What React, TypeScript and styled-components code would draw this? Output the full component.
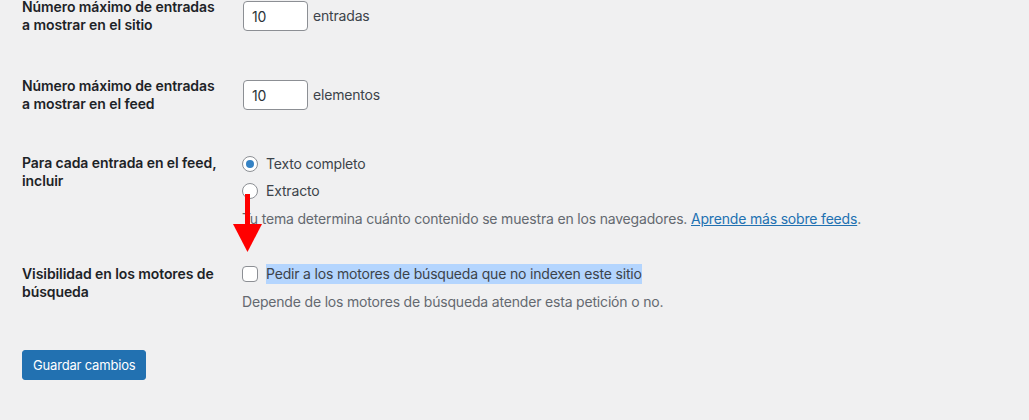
import React from "react";
import styled, { createGlobalStyle } from "styled-components";

const GlobalStyle = createGlobalStyle`
  html, body {
    margin: 0;
    padding: 0;
    background: #f0f0f1;
  }
  body {
    font-family: Inter, "Liberation Sans", Arial, sans-serif;
    font-size: 14px;
    letter-spacing: -0.18px;
    color: #3c434a;
    overflow: hidden;
  }
`;

const Page = styled.div`
  position: relative;
  width: 1029px;
  height: 420px;
  overflow: hidden;
  padding-left: 22px;
  box-sizing: border-box;
`;

const Form = styled.form`
  margin-top: -22px;
`;

const Row = styled.div<{ $h: number }>`
  display: grid;
  grid-template-columns: 210px 1fr;
  height: ${(p) => p.$h}px;
`;

const Label = styled.div`
  padding: 20px 10px 0 0;
  width: 200px;
  line-height: 18.2px;
  font-weight: 600;
  letter-spacing: -0.08px;
  color: #1d2327;
`;

const Field = styled.div<{ $pt: number }>`
  padding: ${(p) => p.$pt}px 10px 0 10px;
  line-height: 18.2px;
`;

const InputLine = styled.div`
  display: flex;
  align-items: center;
  height: 30px;
  gap: 4px;
`;

const NumberInput = styled.input`
  box-sizing: border-box;
  width: 65px;
  height: 30px;
  margin: 0 1px;
  padding: 0 8px;
  border: 1px solid #8c8f94;
  border-radius: 4px;
  background: #fff;
  color: #2c3338;
  font-family: inherit;
  font-size: 14px;
  letter-spacing: inherit;
  outline: none;
`;

const OptionLine = styled.label<{ $h?: number }>`
  display: flex;
  align-items: center;
  gap: 8px;
  height: ${(p) => p.$h ?? 18}px;
  margin-bottom: 9px;
  color: #3c434a;
`;

const Radio = styled.span<{ $checked?: boolean }>`
  position: relative;
  box-sizing: border-box;
  width: 16px;
  height: 16px;
  border-radius: 50%;
  border: 1px solid #8c8f94;
  background: #fff;
  flex: none;
  &::before {
    content: "";
    display: ${(p) => (p.$checked ? "block" : "none")};
    position: absolute;
    left: 3px;
    top: 3px;
    width: 8px;
    height: 8px;
    border-radius: 50%;
    background: #3582c4;
  }
`;

const Checkbox = styled.span`
  box-sizing: border-box;
  width: 16px;
  height: 16px;
  border-radius: 4px;
  border: 1px solid #8c8f94;
  background: #fff;
  flex: none;
`;

const Selected = styled.span`
  display: inline-block;
  line-height: 20px;
  height: 20px;
  background: #b4d5fe;
  color: #3c434a;
`;

const Description = styled.p<{ $mt: number }>`
  margin: ${(p) => p.$mt}px 0 0;
  line-height: 18.2px;
  color: #646970;
`;

const Link = styled.a`
  color: #2271b1;
  text-decoration: underline;
`;

const Submit = styled.div`
  padding-top: 34px;
`;

const PrimaryButton = styled.button`
  box-sizing: border-box;
  height: 30px;
  padding: 0 10px;
  border: 1px solid #2271b1;
  border-radius: 3px;
  background: #2271b1;
  color: #fff;
  font-family: inherit;
  font-size: 13px;
  letter-spacing: inherit;
  line-height: 28px;
  cursor: pointer;
`;

const ArrowSvg = styled.svg`
  position: absolute;
  left: 233px;
  top: 194px;
  pointer-events: none;
`;

export default function App() {
  return (
    <>
      <GlobalStyle />
      <Page>
        <Form onSubmit={(e) => e.preventDefault()}>
          <Row $h={79}>
            <Label>Número máximo de entradas a mostrar en el sitio</Label>
            <Field $pt={23}>
              <InputLine>
                <NumberInput type="text" defaultValue="10" />
                <span>entradas</span>
              </InputLine>
            </Field>
          </Row>
          <Row $h={77}>
            <Label>Número máximo de entradas a mostrar en el feed</Label>
            <Field $pt={23}>
              <InputLine>
                <NumberInput type="text" defaultValue="10" />
                <span>elementos</span>
              </InputLine>
            </Field>
          </Row>
          <Row $h={111}>
            <Label>Para cada entrada en el feed, incluir</Label>
            <Field $pt={21}>
              <OptionLine>
                <Radio $checked />
                <span>Texto completo</span>
              </OptionLine>
              <OptionLine>
                <Radio />
                <span>Extracto</span>
              </OptionLine>
              <Description $mt={10}>
                Tu tema determina cuánto contenido se muestra en los navegadores.{" "}
                <Link href="#">Aprende más sobre feeds</Link>.
              </Description>
            </Field>
          </Row>
          <Row $h={71}>
            <Label>Visibilidad en los motores de búsqueda</Label>
            <Field $pt={19}>
              <OptionLine $h={20}>
                <Checkbox />
                <Selected>Pedir a los motores de búsqueda que no indexen este sitio</Selected>
              </OptionLine>
              <Description $mt={4}>
                Depende de los motores de búsqueda atender esta petición o no.
              </Description>
            </Field>
          </Row>
          <Submit>
            <PrimaryButton type="submit">Guardar cambios</PrimaryButton>
          </Submit>
        </Form>
        <ArrowSvg width="30" height="60" viewBox="0 0 30 60">
          <rect x="12" y="0" width="5" height="32" fill="#ff0000" />
          <polygon points="0,30 29,30 14.5,58" fill="#ff0000" />
        </ArrowSvg>
      </Page>
    </>
  );
}
